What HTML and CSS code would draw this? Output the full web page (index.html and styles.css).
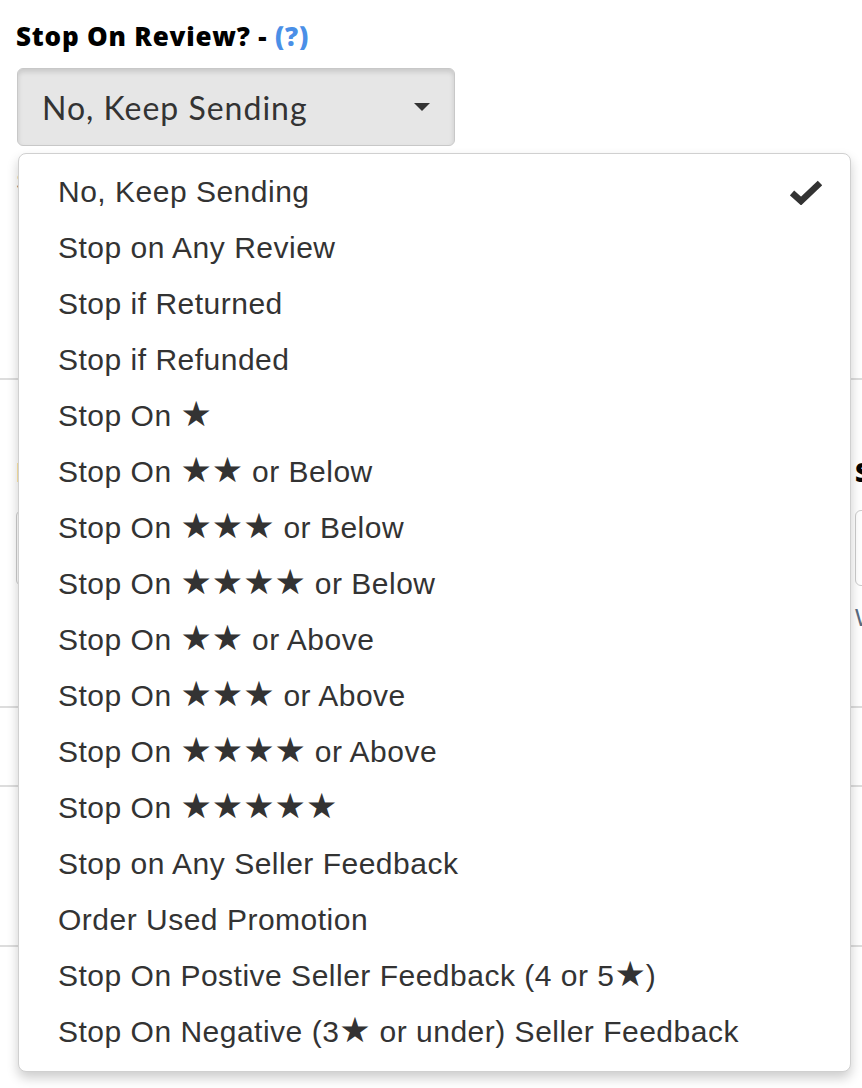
FILE: index.html
```html
<!DOCTYPE html>
<html>
<head>
<meta charset="utf-8">
<link rel="stylesheet" href="styles.css">
</head>
<body>
<div class="page">
  <section class="field">
    <h2 class="label">Stop On Review? - <a class="help">(?)</a></h2>
    <button class="select">
      <span class="select-text">No, Keep Sending</span>
      <span class="caret"></span>
    </button>
    <p class="hint">Stop sending emails when a review is detected.</p>
  </section>
  <hr class="rule rule-a">
  <section class="cols">
    <div class="col">
      <h3 class="sublabel">Delay</h3>
      <div class="input"></div>
    </div>
    <div class="col">
      <h3 class="sublabel">Send</h3>
      <div class="input"></div>
      <p class="note">When</p>
    </div>
  </section>
  <hr class="rule rule-b">
  <hr class="rule rule-c">
  <hr class="rule rule-d">

  <ul class="menu">
    <li class="item selected">No, Keep Sending
      <svg class="check" viewBox="0 0 32 26" width="32" height="26"><path d="M2 14 L11 22 L30 4" fill="none" stroke="#333" stroke-width="6.5" stroke-linejoin="miter"/></svg>
    </li>
    <li class="item">Stop on Any Review</li>
    <li class="item">Stop if Returned</li>
    <li class="item">Stop if Refunded</li>
    <li class="item">Stop On <span class="stars">★</span></li>
    <li class="item">Stop On <span class="stars">★★</span> or Below</li>
    <li class="item">Stop On <span class="stars">★★★</span> or Below</li>
    <li class="item">Stop On <span class="stars">★★★★</span> or Below</li>
    <li class="item">Stop On <span class="stars">★★</span> or Above</li>
    <li class="item">Stop On <span class="stars">★★★</span> or Above</li>
    <li class="item">Stop On <span class="stars">★★★★</span> or Above</li>
    <li class="item">Stop On <span class="stars">★★★★★</span></li>
    <li class="item">Stop on Any Seller Feedback</li>
    <li class="item">Order Used Promotion</li>
    <li class="item">Stop On Postive Seller Feedback (4 or 5<span class="stars">★</span>)</li>
    <li class="item">Stop On Negative (3<span class="stars">★</span> or under) Seller Feedback</li>
  </ul>
</div>
</body>
</html>
```
FILE: styles.css
```css
* { box-sizing: border-box; }
html, body { margin: 0; padding: 0; background: #fff; }
body { width: 862px; height: 1088px; overflow: hidden; font-family: "Liberation Sans", Roboto, sans-serif; color: #333; }
.page { position: relative; padding: 0 0 0 16px; width: 1700px; }

.field { width: 830px; padding-top: 18px; }
.label { margin: 0; font-family: "Open Sans", sans-serif; font-weight: 800; font-size: 26px; line-height: 36px; color: #000; letter-spacing: 0.8px; }
.help { color: #4a8fe7; text-decoration: none; }
.select {
  margin-top: 14px; margin-left: 1px;
  width: 438px; height: 78px;
  display: flex; align-items: center; justify-content: space-between;
  padding: 0 24px 0 24px;
  background: #e6e6e6; border: 1.5px solid #c8c8c8; border-radius: 6px;
  box-shadow: inset 0 3px 5px rgba(0,0,0,0.125);
  font-family: Lato, sans-serif; font-size: 32px; color: #333;
}
.select-text { letter-spacing: 1px; }
.caret { width: 0; height: 0; border-left: 8px solid transparent; border-right: 8px solid transparent; border-top: 8px solid #333; margin-right: 0px; }
.hint { margin: 22px 0 0; font-size: 24px; color: #777; height: 210px; }

.rule { border: 0; border-top: 2px solid #ddd; margin: 0; width: 1700px; margin-left: -16px; }
.rule-a { margin-top: 0; }
.cols { display: grid; grid-template-columns: 839px 839px; height: 326px; padding-top: 74px; }
.sublabel { margin: 0; font-family: "Open Sans", sans-serif; font-weight: 800; font-size: 26px; line-height: 36px; color: #000; }
.input { margin-top: 20px; height: 76px; width: 420px; border: 1.5px solid #ccc; border-radius: 6px; }
.note { margin: 18px 0 0; font-size: 24px; color: #5a6b80; }
.rule-b { margin-top: 0; }
.rule-c { margin-top: 77px; }
.rule-d { margin-top: 158px; }

.menu {
  position: absolute; left: 18px; top: 153px;
  width: 833px; height: 919px;
  margin: 0; padding: 10px 0 0 0; list-style: none;
  background: #fff; border: 1.5px solid #d0d0d0; border-radius: 8px;
  box-shadow: 0 6px 12px rgba(0,0,0,0.2);
}
.item { position: relative; height: 56px; line-height: 56px; padding-left: 39px; font-size: 30px; letter-spacing: 0.5px; color: #333; white-space: nowrap; }
.stars { font-family: "DejaVu Sans", sans-serif; font-size: 35px; line-height: 0; letter-spacing: 0; }
.check { position: absolute; right: 28px; top: 15px; }
```
